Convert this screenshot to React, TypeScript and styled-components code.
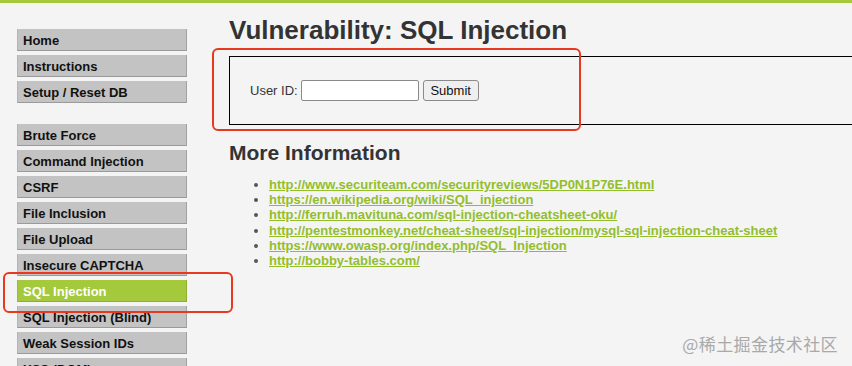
import React from "react";
import styled, { createGlobalStyle } from "styled-components";

const Global = createGlobalStyle`
  html, body { margin: 0; padding: 0; }
  body {
    background: #f4f4f4;
    font-family: "Liberation Sans", Arial, sans-serif;
    color: #333;
    overflow: hidden;
    width: 852px;
    height: 366px;
  }
`;

const Page = styled.div`
  position: relative;
  width: 852px;
  height: 366px;
  overflow: hidden;
  border-top: 3px solid #a6c93c;
  box-sizing: border-box;
`;

const Layout = styled.div`
  display: grid;
  grid-template-columns: 170px 1fr;
  column-gap: 42px;
  padding-left: 17px;
`;

const Nav = styled.nav`
  display: flex;
  flex-direction: column;
  padding-top: 26px;
`;

const NavGroup = styled.ul`
  list-style: none;
  margin: 0 0 21px 0;
  padding: 0;
  display: flex;
  flex-direction: column;
  gap: 4px;
`;

const NavItem = styled.li<{ $active?: boolean }>`
  height: 22px;
  box-sizing: border-box;
  padding: 2px 0 0 5px;
  line-height: 19px;
  font-size: 13px;
  font-weight: bold;
  color: ${(p) => (p.$active ? "#ffffff" : "#111111")};
  background: ${(p) => (p.$active ? "#a4c93c" : "#c3c3c3")};
  border-right: 1px solid ${(p) => (p.$active ? "#8fae30" : "#a2a2a2")};
  border-bottom: 1px solid ${(p) => (p.$active ? "#8fae30" : "#9a9a9a")};
  border-left: 1px solid ${(p) => (p.$active ? "#9abd36" : "#b4b4b4")};
  white-space: nowrap;
`;

const Main = styled.main`
  padding-top: 12px;
`;

const Title = styled.h1`
  margin: 0 0 11px 0;
  font-size: 26px;
  line-height: 30px;
  font-weight: bold;
  color: #333;
`;

const FormBox = styled.div`
  width: 700px;
  height: 69px;
  box-sizing: border-box;
  border: 1px solid #000;
  display: flex;
  align-items: center;
  padding-left: 20px;
`;

const Label = styled.label`
  font-size: 13px;
  color: #333;
  margin-right: 3px;
`;

const Input = styled.input`
  width: 118px;
  height: 21px;
  box-sizing: border-box;
  margin: 0 4px 0 0;
  border: 1px solid #8a8a8a;
  border-radius: 2px;
  background: #fff;
`;

const Button = styled.button`
  width: 56px;
  height: 21px;
  box-sizing: border-box;
  padding: 0;
  font-family: "Liberation Sans", Arial, sans-serif;
  font-size: 13px;
  color: #111;
  background: #efefef;
  border: 1px solid #8a8a8a;
  border-radius: 3px;
`;

const SubTitle = styled.h2`
  margin: 16px 0 12px 0;
  font-size: 21px;
  line-height: 24px;
  font-weight: bold;
  color: #333;
`;

const Links = styled.ul`
  margin: 0;
  padding-left: 40px;
  font-size: 13px;
  line-height: 15.2px;
  font-weight: bold;
  color: #555;
`;

const LinkA = styled.a`
  color: #93be2c;
  text-decoration: underline;
`;

const Mark = styled.div<{ $l: number; $t: number; $w: number; $h: number }>`
  position: absolute;
  left: ${(p) => p.$l}px;
  top: ${(p) => p.$t}px;
  width: ${(p) => p.$w}px;
  height: ${(p) => p.$h}px;
  box-sizing: border-box;
  border: 2px solid #e8391f;
  border-radius: 6px;
  pointer-events: none;
`;

const Watermark = styled.div`
  position: absolute;
  right: 14px;
  bottom: 10px;
  font-family: "Noto Sans CJK SC", sans-serif;
  font-size: 17px;
  color: #a9a9a9;
  letter-spacing: 0.4px;
`;

const groups = [
  ["Home", "Instructions", "Setup / Reset DB"],
  [
    "Brute Force",
    "Command Injection",
    "CSRF",
    "File Inclusion",
    "File Upload",
    "Insecure CAPTCHA",
    "SQL Injection",
    "SQL Injection (Blind)",
    "Weak Session IDs",
    "XSS (DOM)",
  ],
];

const links = [
  "http://www.securiteam.com/securityreviews/5DP0N1P76E.html",
  "https://en.wikipedia.org/wiki/SQL_injection",
  "http://ferruh.mavituna.com/sql-injection-cheatsheet-oku/",
  "http://pentestmonkey.net/cheat-sheet/sql-injection/mysql-sql-injection-cheat-sheet",
  "https://www.owasp.org/index.php/SQL_Injection",
  "http://bobby-tables.com/",
];

export default function App() {
  return (
    <>
      <Global />
      <Page>
        <Layout>
          <Nav>
            {groups.map((g, i) => (
              <NavGroup key={i}>
                {g.map((item) => (
                  <NavItem key={item} $active={item === "SQL Injection"}>
                    {item}
                  </NavItem>
                ))}
              </NavGroup>
            ))}
          </Nav>
          <Main>
            <Title>Vulnerability: SQL Injection</Title>
            <FormBox>
              <Label>User ID:</Label>
              <Input type="text" />
              <Button>Submit</Button>
            </FormBox>
            <SubTitle>More Information</SubTitle>
            <Links>
              {links.map((l) => (
                <li key={l}>
                  <LinkA href="#">{l}</LinkA>
                </li>
              ))}
            </Links>
          </Main>
        </Layout>
        <Mark $l={212} $t={45} $w={369} $h={83} />
        <Mark $l={3} $t={269} $w={230} $h={41} />
        <Watermark>@稀土掘金技术社区</Watermark>
      </Page>
    </>
  );
}
